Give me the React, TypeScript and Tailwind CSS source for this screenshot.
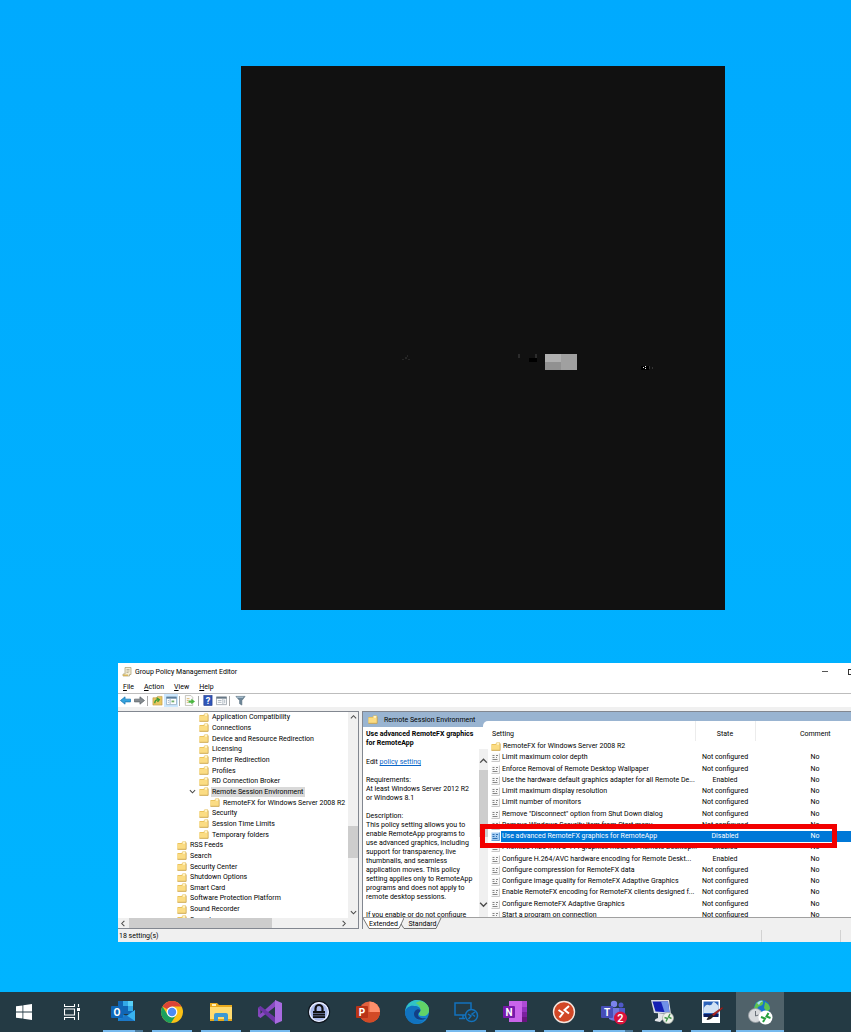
import { ReactNode, useState } from "react";
import clsx from "clsx";

type TreeItem = { label: string; level: 1 | 2 | 3; open?: boolean };
type Setting = { name: string; state: string; comment: string; folder?: boolean };

const TREE: TreeItem[] = [
  { label: "Application Compatibility", level: 2 },
  { label: "Connections", level: 2 },
  { label: "Device and Resource Redirection", level: 2 },
  { label: "Licensing", level: 2 },
  { label: "Printer Redirection", level: 2 },
  { label: "Profiles", level: 2 },
  { label: "RD Connection Broker", level: 2 },
  { label: "Remote Session Environment", level: 2, open: true },
  { label: "RemoteFX for Windows Server 2008 R2", level: 3 },
  { label: "Security", level: 2 },
  { label: "Session Time Limits", level: 2 },
  { label: "Temporary folders", level: 2 },
  { label: "RSS Feeds", level: 1 },
  { label: "Search", level: 1 },
  { label: "Security Center", level: 1 },
  { label: "Shutdown Options", level: 1 },
  { label: "Smart Card", level: 1 },
  { label: "Software Protection Platform", level: 1 },
  { label: "Sound Recorder", level: 1 },
  { label: "Speech", level: 1 },
];

const SETTINGS: Setting[] = [
  { name: "RemoteFX for Windows Server 2008 R2", state: "", comment: "", folder: true },
  { name: "Limit maximum color depth", state: "Not configured", comment: "No" },
  { name: "Enforce Removal of Remote Desktop Wallpaper", state: "Not configured", comment: "No" },
  { name: "Use the hardware default graphics adapter for all Remote De...", state: "Enabled", comment: "No" },
  { name: "Limit maximum display resolution", state: "Not configured", comment: "No" },
  { name: "Limit number of monitors", state: "Not configured", comment: "No" },
  { name: "Remove \"Disconnect\" option from Shut Down dialog", state: "Not configured", comment: "No" },
  { name: "Remove Windows Security item from Start menu", state: "Not configured", comment: "No" },
  { name: "Use advanced RemoteFX graphics for RemoteApp", state: "Disabled", comment: "No" },
  { name: "Prioritize H.264/AVC 444 graphics mode for Remote Desktop...", state: "Enabled", comment: "No" },
  { name: "Configure H.264/AVC hardware encoding for Remote Deskt...", state: "Enabled", comment: "No" },
  { name: "Configure compression for RemoteFX data", state: "Not configured", comment: "No" },
  { name: "Configure image quality for RemoteFX Adaptive Graphics", state: "Not configured", comment: "No" },
  { name: "Enable RemoteFX encoding for RemoteFX clients designed f...", state: "Not configured", comment: "No" },
  { name: "Configure RemoteFX Adaptive Graphics", state: "Not configured", comment: "No" },
  { name: "Start a program on connection", state: "Not configured", comment: "No" },
];

const INDENT = { 1: "pl-[59px]", 2: "pl-[81px]", 3: "pl-[92px]" };

function FolderIcon() {
  return (
    <svg viewBox="0 0 10 9" className="h-[9px] w-[10px] shrink-0" aria-hidden="true">
      <path d="M.5 2h4l1-1.500h3.500V8.500H.5z" fill="#e6bd52" />
      <path d="M5.500 1h3v2h-3z" fill="#fff3c4" />
      <path d="M.5 2.800h8.500v5.200H.5z" fill="#fbdc83" />
      <path d="M.5 8.300h8.700V1.500" fill="none" stroke="#c9a24a" strokeWidth=".8" />
    </svg>
  );
}

function PolicyIcon({ tinted }: { tinted?: boolean }) {
  return (
    <svg viewBox="0 0 9 9" className="h-[9px] w-[9px] shrink-0" aria-hidden="true">
      <path d="M.5.500h8v8h-8z" fill={tinted ? "#a5cdf2" : "#f7f7f7"} />
      <path d="M8.500.500v8h-8" fill="none" stroke={tinted ? "#4a90d0" : "#bcbcbc"} strokeWidth=".8" />
      <path d="M1.500 2.500h2M1.500 4.500h2M1.500 6.500h5M5 2.500h2M5 4.500h1" stroke={tinted ? "#1f63a8" : "#777"} strokeWidth=".9" />
    </svg>
  );
}

function Chevron({ dir, className }: { dir: "up" | "down" | "left" | "right"; className?: string }) {
  const d = { up: "M1 5l3-3 3 3", down: "M1 2.500l3 3 3-3", left: "M5 1L2 4l3 3", right: "M3 1l3 3-3 3" }[dir];
  return (
    <svg viewBox="0 0 8 8" className={clsx("shrink-0", className ?? "size-[7px]")} aria-hidden="true">
      <path d={d} fill="none" stroke="#4b4b4b" strokeWidth="1.200" />
    </svg>
  );
}

function ToolButton({ label, active, children }: { label: string; active?: boolean; children: ReactNode }) {
  return (
    <button aria-label={label} className={clsx("flex h-[13px] w-[14px] items-center justify-center", active && "bg-[#cce8ff]")}>
      <svg viewBox="0 0 12 12" className="size-[11px]" aria-hidden="true">
        {children}
      </svg>
    </button>
  );
}

function Separator() {
  return <span className="mx-px h-[10px] w-px bg-[#a8a8a8]" />;
}

function Toolbar() {
  return (
    <div className="flex h-[13px] items-center bg-white">
      <ToolButton label="Back">
        <path d="M.5 6L5.500 2v2.500h6v3h-6V10z" fill="#35a3dd" stroke="#1976b4" strokeWidth=".8" />
      </ToolButton>
      <ToolButton label="Forward">
        <path d="M11.500 6l-5-4v2.500h-6v3h6V10z" fill="#858b90" stroke="#5f666b" strokeWidth=".8" />
      </ToolButton>
      <Separator />
      <div className="flex pl-px">
        <ToolButton label="Up one level">
          <path d="M1 3h4l1-1.500h5V11H1z" fill="#e9c661" stroke="#b8923a" strokeWidth=".6" />
          <path d="M3 9q0-4 4-4M5 3l3 2-2 2.500" fill="none" stroke="#3d9c35" strokeWidth="1.500" />
        </ToolButton>
        <ToolButton label="Show console tree" active>
          <path d="M.5 2h11v8.500H.5z" fill="#fff" stroke="#9fb4c6" />
          <path d="M.5 2h11v2H.5z" fill="#5a7f9f" />
          <path d="M4.500 4v6M2 6h1.500M2 8h1.500" stroke="#9fb4c6" />
          <path d="M6 6h3v2H6z" fill="#6fae6a" />
        </ToolButton>
      </div>
      <Separator />
      <div className="px-px">
        <ToolButton label="Export list">
          <path d="M1.500.500h6l2 2v9h-8z" fill="#fafafa" stroke="#b4b4a8" strokeWidth=".8" />
          <path d="M3 4h3M3 6h2M3 8h2" stroke="#d1a344" strokeWidth=".8" />
          <path d="M5 6h3V4l4 3-4 3V8.500H5z" fill="#49b63f" />
        </ToolButton>
      </div>
      <Separator />
      <div className="flex">
        <ToolButton label="Help">
          <rect x="2" y=".5" width="9" height="11" fill="#2f55b8" stroke="#1b3583" strokeWidth=".6" />
          <text x="6.500" y="9.500" textAnchor="middle" fontSize="10" fontWeight="700" fill="#fff">?</text>
        </ToolButton>
        <ToolButton label="Properties">
          <path d="M.5 2h11v8.500H.5z" fill="#fff" stroke="#a3abb2" />
          <path d="M.5 2h11v2H.5z" fill="#687886" />
          <path d="M7.500 4v6M2 6h4M2 8h4M9.500 5v4" stroke="#a9b4bd" />
        </ToolButton>
      </div>
      <Separator />
      <div className="pl-[2px]">
        <ToolButton label="Filter">
          <path d="M1 1.500h10L7.500 6v5L5 9.500V6z" fill="#6e8799" stroke="#4f6677" strokeWidth=".6" />
          <path d="M2 2.500h7" stroke="#b8cddb" />
        </ToolButton>
      </div>
    </div>
  );
}

function TreePane() {
  return (
    <div className="flex w-[241px] shrink-0 flex-col border-t border-r border-b border-[#828790] bg-white">
      <div className="flex h-[206px] overflow-hidden">
        <ul role="tree" className="flex h-[213px] flex-1 flex-col">
          {TREE.map((item) => (
            <li
              key={item.label}
              role="treeitem"
              aria-selected={!!item.open}
              className={clsx("flex flex-1 items-center", item.open ? "pl-[71px]" : INDENT[item.level])}
            >
              {item.open && <Chevron dir="down" className="mr-[3px] size-[7px]" />}
              <FolderIcon />
              <span className={clsx("ml-[2px] pr-[2px] pl-px leading-[10px] whitespace-nowrap", item.open && "bg-[#d9d9d9]")}>
                {item.label}
              </span>
            </li>
          ))}
        </ul>
        <div className="flex w-[10px] shrink-0 flex-col items-center bg-[#f0f0f0] py-[2px]">
          <Chevron dir="up" />
          <span className="mt-[105px] h-8 w-full bg-[#cdcdcd]" />
          <Chevron dir="down" className="mt-auto size-[7px]" />
        </div>
      </div>
      <div className="flex h-[10px] items-center bg-[#f0f0f0] pl-[2px]">
        <Chevron dir="left" />
        <span className="ml-[2px] h-full w-[143px] bg-[#cdcdcd]" />
        <Chevron dir="right" className="mr-[11px] ml-auto size-[7px]" />
      </div>
    </div>
  );
}

function Description() {
  return (
    <div className="flex w-[125px] shrink-0 flex-col">
      <div className="flex h-[15px] shrink-0">
        <h2 className="flex flex-1 items-center gap-[6px] pl-[5px] whitespace-nowrap">
          <FolderIcon />
          Remote Session Environment
        </h2>
        <span className="mt-[9px] w-[5px] rounded-tl-[5px] bg-white" />
      </div>
      <div className="flex h-[190px] bg-white">
        <div className="flex w-[116px] flex-col gap-[9px] pt-[3px] pl-[3px] leading-[9px] whitespace-nowrap">
          <p className="font-bold">
            Use advanced RemoteFX graphics
            <br />
            for RemoteApp
          </p>
          <p className="pt-px">
            Edit <a href="#policy" className="text-[#0a66c8] underline">policy setting</a>
          </p>
          <p>
            Requirements:
            <br />
            At least Windows Server 2012 R2
            <br />
            or Windows 8.1
          </p>
          <p>
            Description:
            <br />
            This policy setting allows you to
            <br />
            enable RemoteApp programs to
            <br />
            use advanced graphics, including
            <br />
            support for transparency, live
            <br />
            thumbnails, and seamless
            <br />
            application moves. This policy
            <br />
            setting applies only to RemoteApp
            <br />
            programs and does not apply to
            <br />
            remote desktop sessions.
          </p>
          <p>If you enable or do not configure</p>
        </div>
        <div className="mt-[22px] flex w-[9px] flex-col items-center bg-[#f0f0f0] pt-2">
          <Chevron dir="up" className="size-[9px]" />
          <span className="mt-1 h-[67px] w-[9px] bg-[#cdcdcd]" />
          <Chevron dir="down" className="mt-auto mb-2 size-[9px]" />
        </div>
      </div>
    </div>
  );
}

function SettingsTable() {
  const [selected, setSelected] = useState(8);

  return (
    <div className="min-w-0 flex-1 pt-[9px]">
      <div className="h-full bg-white">
        <table className="w-full table-fixed border-collapse">
          <colgroup>
            <col className="w-[207px]" />
            <col className="w-[60px]" />
            <col className="w-[120px]" />
            <col />
          </colgroup>
          <thead>
            <tr className="h-5">
              <th className="pt-[5px] pl-1 text-left font-normal">Setting</th>
              <th className="border-x border-[#ececec] pt-[5px] text-center font-normal">State</th>
              <th className="pt-[5px] text-center font-normal">Comment</th>
              <td />
            </tr>
          </thead>
          <tbody className="h-[180px]">
            {SETTINGS.map((s, i) => {
              const on = i === selected;
              const cell = clsx("p-0 text-center", on && "bg-[#0078d7] text-white");
              return (
                <tr key={s.name} onClick={() => setSelected(i)} className="leading-[11px] whitespace-nowrap">
                  <td className="p-0">
                    <div className="flex items-center pl-[3px]">
                      {s.folder ? <FolderIcon /> : <PolicyIcon tinted={on} />}
                      <span className={clsx("ml-px flex-1 pl-px", on && "bg-[#0078d7] text-white")}>{s.name}</span>
                    </div>
                  </td>
                  <td className={cell}>{s.state}</td>
                  <td className={cell}>{s.comment}</td>
                  <td className={cell} />
                </tr>
              );
            })}
          </tbody>
        </table>
      </div>
    </div>
  );
}

function ViewTabs() {
  return (
    <div className="flex h-3 border-t border-[#a0a0a0] bg-[#f0f0f0] leading-[10px]">
      <button className="relative h-[11px] w-[41px]">
        <svg viewBox="0 0 41 11" className="absolute inset-0" aria-hidden="true">
          <path d="M0 0l6 10.500h30L41 0z" fill="#fff" />
          <path d="M0 0l6 10.500h30L41 0" fill="none" stroke="#555" strokeWidth=".8" />
        </svg>
        <span className="relative">Extended</span>
      </button>
      <button className="relative h-[11px] w-[37px]">
        <svg viewBox="0 0 37 11" className="absolute inset-0 overflow-visible" aria-hidden="true">
          <path d="M-3 6L0 10.500h32L37 0" fill="none" stroke="#555" strokeWidth=".8" />
        </svg>
        <span className="relative">Standard</span>
      </button>
    </div>
  );
}

function PolicyEditor() {
  return (
    <section className="absolute top-[663px] -right-11 left-[118px] bg-[#f0f0f0] text-[7px] leading-[10px] text-black">
      <header className="flex h-[17px] items-center bg-white pl-1">
        <svg viewBox="0 0 10 10" className="size-[10px]" aria-hidden="true">
          <path d="M3 .5h6v7H7.500V9H1V7h2z" fill="#f4efd8" stroke="#a89c70" strokeWidth=".7" />
          <path d="M4.500 2.500h3M4.500 4h3M4.500 5.500h2" stroke="#9a8f78" strokeWidth=".6" />
          <path d="M1 7.500h5V9H1z" fill="#d9b65d" />
        </svg>
        <h1 className="ml-[3px]">Group Policy Management Editor</h1>
        <div className="ml-auto flex">
          <button aria-label="Minimize" className="flex h-4 w-7 items-center justify-center">
            <span className="h-px w-[6px] bg-[#555]" />
          </button>
          <button aria-label="Maximize" className="flex h-4 w-7 items-center pl-[9px]">
            <span className="size-[6px] border border-[#333]" />
          </button>
          <button aria-label="Close" className="flex h-4 w-7 items-center justify-center">
            <svg viewBox="0 0 6 6" className="size-[6px]" aria-hidden="true">
              <path d="M0 0l6 6M6 0L0 6" stroke="#333" />
            </svg>
          </button>
        </div>
      </header>
      <nav className="flex h-[14px] items-center gap-[10px] border-b border-[#bdbdbd] bg-white pl-[5px]">
        {["File", "Action", "View", "Help"].map((m) => (
          <button key={m}>
            <span className="underline">{m[0]}</span>
            {m.slice(1)}
          </button>
        ))}
      </nav>
      <Toolbar />
      <div className="mt-1 flex h-[218px] gap-[3px]">
        <TreePane />
        <div className="flex min-w-0 flex-1 flex-col border-t border-l border-[#828790]">
          <div className="flex h-[205px] overflow-hidden bg-[#99b4d1]">
            <Description />
            <SettingsTable />
          </div>
          <ViewTabs />
        </div>
      </div>
      <footer className="flex h-[13px] items-center justify-between">
        <span className="pl-px">18 setting(s)</span>
        <span className="mr-[54px] h-[12px] w-[80px] border-x border-[#d2d2d2]" />
      </footer>
      <div className="pointer-events-none absolute top-[161px] left-[362px] h-6 w-[357px] border-[5px] border-[#f20000]" />
    </section>
  );
}

// the remote app window never paints, only a few stale tiles show
function BlankWindow() {
  return (
    <section className="absolute top-[66px] left-[241px] h-[544px] w-[484px] bg-[#111]">
      <svg viewBox="0 0 484 544" shapeRendering="crispEdges" aria-hidden="true">
        <path d="M304 288h16v8h-16z" fill="#b0b0b0" />
        <path d="M304 296h16v8h-16z" fill="#919191" />
        <path d="M320 288h16v16h-16z" fill="#a0a0a0" />
        <path d="M288 292h8v4h-8z" fill="#000" />
        <path d="M294 288h2v4h-2zM277 288h2v4h-2z" fill="#2c2c2c" />
        <path d="M164 291h2v2h-2zM166 289h1v2h-1zM161 293h2v1h-2zM167 293h2v1h-2z" fill="#262626" />
        <path d="M400 300h8v4h-8z" fill="#000" />
        <path d="M402 301h1v1h-1zM404 300h1v1h-1zM404 302h1v1h-1z" fill="#eee" />
        <path d="M408 300h1v3h-1zM411 301h1v2h-1z" fill="#333" />
      </svg>
    </section>
  );
}

// white initial on the coloured tile of the Office icons
function Tile({ letter, color }: { letter: string; color: string }) {
  return (
    <>
      <rect x="0" y="6" width="12" height="12" rx="1" fill={color} />
      <text x="6" y="15.500" textAnchor="middle" fontSize="10" fontWeight="700" fill="#fff">
        {letter}
      </text>
    </>
  );
}

type App = { name: string; running?: boolean; stacked?: boolean; active?: boolean; icon: ReactNode };

const APPS: App[] = [
  {
    name: "Outlook",
    running: true,
    stacked: true,
    icon: (
      <>
        <path d="M7 1h15v13H7z" fill="#1066b5" />
        <path d="M12 1h5v5h-5zM17 6h5v5h-5z" fill="#32a9e7" />
        <path d="M17 1h5v5h-5z" fill="#58d0f8" />
        <path d="M7 11l8 5 9-6v11H7z" fill="#1a86d5" />
        <path d="M24 10v11H9z" fill="#39b3ef" />
        <path d="M7 21h17L15 15z" fill="#1b78c8" />
        <Tile letter="O" color="#0f67b8" />
      </>
    ),
  },
  {
    name: "Chrome",
    running: true,
    icon: (
      <>
        <circle cx="12" cy="12" r="11" fill="#fbc116" />
        <path d="M12 12L2.500 6.500A11 11 0 0121.500 6.500H12z" fill="#dc4437" />
        <path d="M2.500 6.500A11 11 0 0011 23l5.500-8.500L12 12 7.500 14.500z" fill="#1ba05e" />
        <circle cx="12" cy="12" r="5.400" fill="#fff" />
        <circle cx="12" cy="12" r="4.200" fill="#4b8bf5" />
      </>
    ),
  },
  {
    name: "File Explorer",
    running: true,
    icon: (
      <>
        <path d="M1 3h7l2 2h13v16H1z" fill="#e8a91d" />
        <path d="M3 4h4v2H3z" fill="#fff0b5" />
        <path d="M1 7h22v12H1z" fill="#ffdb70" />
        <path d="M5 21v-6a2 2 0 012-2h10a2 2 0 012 2v6h-4v-4H9v4z" fill="#3d98d3" />
      </>
    ),
  },
  {
    name: "Visual Studio",
    running: true,
    icon: (
      <>
        <path d="M0 8l2.500-2v12L0 16z" fill="#8246ba" />
        <path d="M0 16l2.500 2L18 6V0z" fill="#8a4bc4" />
        <path d="M0 8l2.500-2L18 18v6z" fill="#6b35a6" />
        <path d="M17 0l7 3v18l-7 3z" fill="#a86be0" />
      </>
    ),
  },
  {
    name: "KeePass",
    icon: (
      <>
        <circle cx="12" cy="12" r="10.500" fill="#a9b8ea" stroke="#101820" strokeWidth="1.400" />
        <circle cx="12" cy="12" r="9.300" fill="none" stroke="#eef2ff" strokeWidth="1.200" />
        <path d="M8.500 11V8.500a3.500 3.500 0 017 0V11" fill="none" stroke="#101014" strokeWidth="2.200" />
        <path d="M6 11h12v7H6z" fill="#101014" />
        <path d="M6 13.500h12M6 15.800h12" stroke="#8d9cd0" strokeWidth=".6" />
      </>
    ),
  },
  {
    name: "PowerPoint",
    icon: (
      <>
        <circle cx="13.500" cy="12" r="10.500" fill="#e2623f" />
        <path d="M13.500 1.500A10.500 10.500 0 0124 12H13.500z" fill="#ff8f6b" />
        <path d="M3 12h21A10.500 10.500 0 013 12z" fill="#d24a26" />
        <Tile letter="P" color="#b93317" />
      </>
    ),
  },
  {
    name: "Edge",
    icon: (
      <>
        <circle cx="12" cy="12" r="12" fill="#1683cf" />
        <path d="M1 8C4 1 9 0 12 0c7 0 12 5 12 10 0 4-3 6-6 6-3 0-4-1-4-2s1.500-1.500 1.500-4C15.500 8 13 6 9 6 5 6 2 8 0 12z" fill="#31c3c7" />
        <path d="M15 1c6 1 9 5 9 9 0 4-3 6-6 6-3 0-4-1-4-2s1.500-1.500 1.500-4c0-3-1-5-5-7z" fill="#62d367" />
        <path d="M0 12c1-5 6-7 9-6 4 0 6 2 6.500 4C12 8 9 11 9 14c0 5 5 8 10 6-3 4-9 5-13 2.500C2 20 0 16 0 12z" fill="#1173c0" />
        <path d="M15.500 10C12 8 9 11 9 14c0 5 6 8 13 4-4 1-9 0-9-3.500 0-2 2.500-2.500 2.500-4.500z" fill="#123f86" />
      </>
    ),
  },
  {
    name: "Remote Desktop",
    running: true,
    icon: (
      <g fill="none" stroke="#1272bd" strokeWidth="1.500">
        <path d="M11 15H1V3h16v6M5 18.500h6M9 15v3" />
        <circle cx="17.500" cy="15.500" r="6" />
        <path d="M14 14l3 2-2.500 3M21 12l-3 2 3 2.500" />
      </g>
    ),
  },
  {
    name: "OneNote",
    running: true,
    icon: (
      <>
        <path d="M6 1h18v21H6z" fill="#ca64ea" />
        <path d="M19 1h5v6h-5z" fill="#ae4bd5" />
        <path d="M19 7h5v5h-5z" fill="#9332bf" />
        <path d="M19 12h5v5h-5z" fill="#7b209f" />
        <path d="M19 17h5v5h-5z" fill="#68147f" />
        <Tile letter="N" color="#7719aa" />
      </>
    ),
  },
  {
    name: "Remote Desktop Manager",
    running: true,
    icon: (
      <>
        <circle cx="12" cy="12" r="10.500" fill="#d24726" stroke="#f6e6df" strokeWidth="1.400" />
        <path d="M6.500 10l4.500 3-3.500 4.500M17 6l-4.500 4 4.500 3.500" fill="none" stroke="#fff" strokeWidth="2" />
      </>
    ),
  },
  {
    name: "Teams",
    running: true,
    stacked: true,
    icon: (
      <>
        <circle cx="13" cy="4" r="3.200" fill="#7b83eb" />
        <circle cx="20" cy="5" r="2.500" fill="#5059c9" />
        <path d="M8 8h11v10q-5 5-11 1z" fill="#7077dc" />
        <path d="M18 8h6v7h-6z" fill="#5059c9" />
        <Tile letter="T" color="#464eb8" />
        <circle cx="19.500" cy="18" r="6.500" fill="#d9123b" />
        <text x="19.500" y="22" textAnchor="middle" fontSize="11" fontWeight="600" fill="#fff">2</text>
      </>
    ),
  },
  {
    name: "Remote Desktop Connection",
    running: true,
    icon: (
      <>
        <path d="M1 0h18l2 14-17-1z" fill="#d5dbe5" />
        <path d="M2.500 1.500H18l1.500 11-14-1z" fill="#1420b4" />
        <path d="M11 1.500h7l1.500 11-5-.5z" fill="#6f90e8" />
        <path d="M8 13l6 1v4l-4 4-5-1q-1-2 3-3z" fill="#e3e5e9" />
        <circle cx="18" cy="18" r="5.500" fill="#eef2ea" stroke="#a7ada5" strokeWidth=".7" />
        <path d="M14.500 17.500l3 1-1.500 3M20 14l-1.500 3 3 1.500" fill="none" stroke="#42974a" strokeWidth="1.400" />
      </>
    ),
  },
  {
    name: "Paint",
    running: true,
    icon: (
      <>
        <path d="M3 0h18v23H3z" fill="#fff" />
        <path d="M4.500 1.500h15v14h-15z" fill="#2b62ba" />
        <path d="M4.500 9q2-5 5-4t4-2 6 3v7h-15z" fill="#d2e2f4" />
        <path d="M4.500 14h15v3h-15z" fill="#0e1e60" />
        <path d="M24 8l-9.500 8-1.500-1.500L23 7.500z" fill="#b32623" stroke="#7a1512" strokeWidth=".6" />
        <path d="M14.500 16l-1.800-1.500Q9 16 7.500 20q5 0 7-4z" fill="#2b2222" />
      </>
    ),
  },
  {
    name: "Remote session",
    running: true,
    active: true,
    icon: (
      <>
        <circle cx="14" cy="8" r="8" fill="#1872cd" />
        <path d="M8 3q5-4 7-2 1 4-3 5t-2 5L6 8zM17 2q5 2 5 7l-3 3-3-4z" fill="#5fc34f" />
        <path d="M9 3q3-3 6-2-3 1-4 4z" fill="#a6dbfa" />
        <circle cx="7.500" cy="15.500" r="7" fill="#d7dadd" stroke="#969ca1" strokeWidth=".8" />
        <path d="M7.500 11v5l3-1" fill="none" stroke="#697078" />
        <circle cx="17.500" cy="17.500" r="7" fill="#fff" />
        <path d="M13 17l4 1.500-2 3.500M20.500 13l-2 3.500 4 1.500" fill="none" stroke="#26a03f" strokeWidth="2" />
      </>
    ),
  },
];

function Taskbar() {
  return (
    <nav aria-label="Taskbar" className="flex h-10 shrink-0 bg-[#243a44]">
      <button aria-label="Start" className="flex w-12 items-center justify-center">
        <svg viewBox="0 0 16 16" className="size-4" aria-hidden="true">
          <path d="M0 2.300L6.500 1.400v6.200H0zM7.300 1.300L16 0v7.600H7.300zM0 8.400h6.500v6.200L0 13.700zM7.300 8.400H16V16l-8.700-1.300z" fill="#fff" />
        </svg>
      </button>
      <button aria-label="Task View" className="flex w-12 items-center justify-center">
        <svg viewBox="0 0 16 16" className="size-4" aria-hidden="true">
          <path d="M.5 0v2.500h10V0M.5 16v-2.500h10V16M.5 5h10v6H.5zM14.500 0v3M14.500 8v8" fill="none" stroke="#fff" strokeWidth="1.100" />
          <path d="M13 4h3v3h-3z" fill="#fff" />
        </svg>
      </button>
      <div className="ml-[3px] flex gap-px">
        {APPS.map((app) => (
          <button
            key={app.name}
            aria-label={app.name}
            className={clsx("flex w-12 flex-col items-center justify-between pt-2", app.active && "bg-[#50626a]")}
          >
            <svg viewBox="0 0 24 24" className="size-6 overflow-visible" aria-hidden="true">
              {app.icon}
            </svg>
            {app.running && (
              <span className={clsx("flex h-[2px] bg-[#76b9ed]", app.active ? "w-12" : "w-10")}>
                {app.stacked && <span className="ml-auto w-2 bg-[#4d7c9d]" />}
              </span>
            )}
          </button>
        ))}
      </div>
    </nav>
  );
}

export default function App() {
  return (
    <div className="flex min-h-screen flex-col font-[Roboto,'Open_Sans',sans-serif]">
      <main className="relative flex-1 overflow-hidden bg-linear-to-b from-[#00aafe] to-[#00b4ff]">
        <BlankWindow />
        <PolicyEditor />
      </main>
      <Taskbar />
    </div>
  );
}
